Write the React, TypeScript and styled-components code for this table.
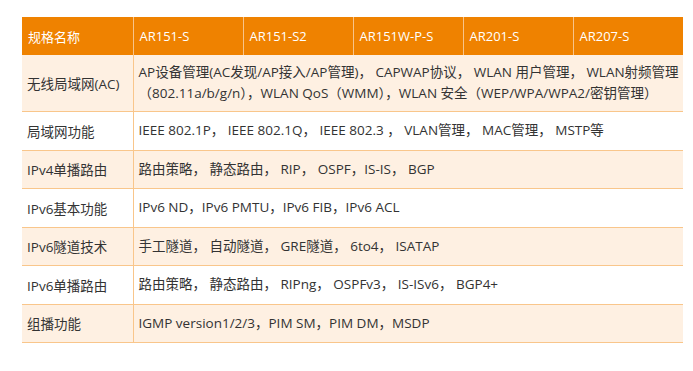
import styled, { createGlobalStyle } from 'styled-components';

const GlobalStyle = createGlobalStyle`
  body {
    margin: 0;
    background: #ffffff;
    font-family: "Open Sans", "Noto Sans CJK SC", sans-serif;
  }
`;

const Page = styled.div`
  padding: 17px 10px 0 22px;
`;

const Table = styled.table`
  width: 661px;
  border-collapse: collapse;
  table-layout: fixed;
  font-size: 13.5px;
  color: #333333;
`;

const HeadCell = styled.th`
  height: 38px;
  padding: 0 0 0 6px;
  background-color: #ef8200;
  color: #ffffff;
  font-weight: normal;
  text-align: left;
  font-size: 13px;
  border-left: 1px solid #f8c48a;

  &:first-child {
    border-left: none;
  }
`;

const Row = styled.tr<{ $shaded: boolean }>`
  background-color: ${({ $shaded }) => ($shaded ? '#fef0e2' : '#ffffff')};
  border-bottom: 1px solid #f9c68b;
`;

const NameCell = styled.td`
  height: 37.5px;
  padding: 0 0 0 5px;
  border-right: 1px solid #f9c68b;
  white-space: nowrap;
`;

const ValueCell = styled.td`
  padding: 7px 0 7px 5px;
  line-height: 21px;
  white-space: nowrap;
`;

const models = ['AR151-S', 'AR151-S2', 'AR151W-P-S', 'AR201-S', 'AR207-S'];

const rows: { name: string; value: string[] }[] = [
  {
    name: '无线局域网(AC)',
    value: [
      'AP设备管理(AC发现/AP接入/AP管理)， CAPWAP协议， WLAN  用户管理， WLAN射频管理',
      '（802.11a/b/g/n），WLAN QoS（WMM），WLAN 安全（WEP/WPA/WPA2/密钥管理）',
    ],
  },
  { name: '局域网功能', value: ['IEEE 802.1P， IEEE 802.1Q， IEEE 802.3 ， VLAN管理， MAC管理， MSTP等'] },
  { name: 'IPv4单播路由', value: ['路由策略， 静态路由， RIP， OSPF，IS-IS， BGP'] },
  { name: 'IPv6基本功能', value: ['IPv6 ND，IPv6 PMTU，IPv6 FIB，IPv6 ACL'] },
  { name: 'IPv6隧道技术', value: ['手工隧道， 自动隧道， GRE隧道， 6to4， ISATAP'] },
  { name: 'IPv6单播路由', value: ['路由策略， 静态路由， RIPng， OSPFv3， IS-ISv6， BGP4+'] },
  { name: '组播功能', value: ['IGMP version1/2/3，PIM SM，PIM DM，MSDP'] },
];

const App = () => {
  return (
    <Page>
      <GlobalStyle />
      <Table>
        <colgroup>
          <col style={{ width: 111 }} />
          {models.map((m) => (
            <col key={m} style={{ width: 110 }} />
          ))}
        </colgroup>
        <thead>
          <tr>
            <HeadCell>规格名称</HeadCell>
            {models.map((m) => (
              <HeadCell key={m}>{m}</HeadCell>
            ))}
          </tr>
        </thead>
        <tbody>
          {rows.map((r, i) => (
            <Row key={r.name} $shaded={i % 2 === 0}>
              <NameCell>{r.name}</NameCell>
              <ValueCell colSpan={5}>
                {r.value.map((line) => (
                  <div key={line}>{line}</div>
                ))}
              </ValueCell>
            </Row>
          ))}
        </tbody>
      </Table>
    </Page>
  );
};

export default App;
